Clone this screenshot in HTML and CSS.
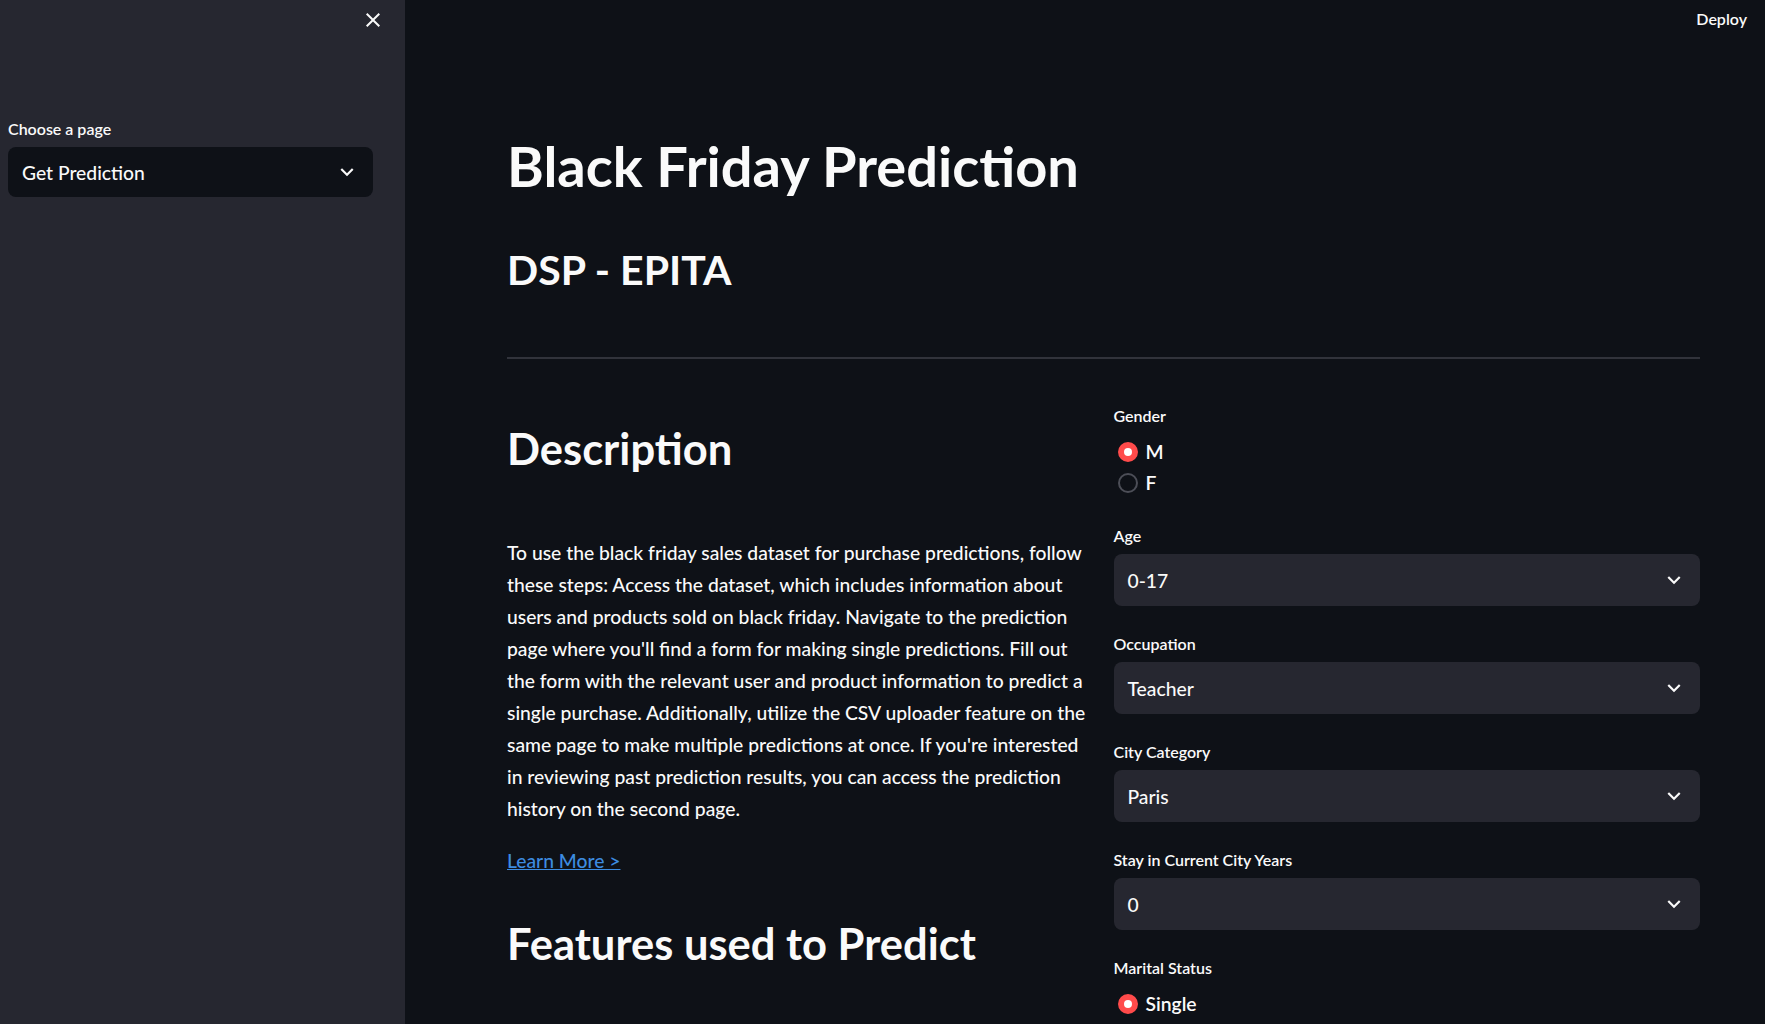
FILE: index.html
```html
<!DOCTYPE html>
<html lang="en">
<head>
<meta charset="utf-8">
<title>Black Friday Prediction</title>
<link rel="stylesheet" href="styles.css">
</head>
<body>
<aside class="sidebar">
  <div class="sidebar-top">
    <button class="icon-btn" aria-label="Close sidebar">
      <svg viewBox="0 0 24 24" width="24" height="24"><path fill="currentColor" d="M19 6.41L17.59 5 12 10.59 6.41 5 5 6.41 10.59 12 5 17.59 6.41 19 12 13.41 17.59 19 19 17.59 13.41 12z"/></svg>
    </button>
  </div>
  <div class="sidebar-body">
    <div class="field">
      <div class="field-label">Choose a page</div>
      <div class="select select-dark">
        <span class="select-value">Get Prediction</span>
        <svg class="chev" viewBox="0 0 24 24" width="26" height="26"><path fill="currentColor" d="M16.59 8.59L12 13.17 7.41 8.59 6 10l6 6 6-6z"/></svg>
      </div>
    </div>
  </div>
</aside>
<main class="main">
  <header class="topbar"><span class="deploy">Deploy</span></header>
  <div class="content">
    <h1 class="title">Black Friday Prediction</h1>
    <h2 class="subtitle">DSP - EPITA</h2>
    <hr class="divider">
    <div class="columns">
      <div class="col">
        <h2 class="section">Description</h2>
        <p class="desc">To use the black friday sales dataset for purchase predictions, follow these steps: Access the dataset, which includes information about users and products sold on black friday. Navigate to the prediction page where you'll find a form for making single predictions. Fill out the form with the relevant user and product information to predict a single purchase. Additionally, utilize the CSV uploader feature on the same page to make multiple predictions at once. If you're interested in reviewing past prediction results, you can access the prediction history on the second page.</p>
        <p class="learn"><a href="#">Learn More &gt;</a></p>
        <h2 class="section section-2">Features used to Predict</h2>
      </div>
      <div class="col form">
        <div class="radio-group">
          <div class="field-label radio-label">Gender</div>
          <div class="radio-row"><span class="radio checked"></span><span class="radio-text">M</span></div>
          <div class="radio-row"><span class="radio"></span><span class="radio-text">F</span></div>
        </div>
        <div class="field">
          <div class="field-label">Age</div>
          <div class="select"><span class="select-value">0-17</span><svg class="chev" viewBox="0 0 24 24" width="26" height="26"><path fill="currentColor" d="M16.59 8.59L12 13.17 7.41 8.59 6 10l6 6 6-6z"/></svg></div>
        </div>
        <div class="field">
          <div class="field-label">Occupation</div>
          <div class="select"><span class="select-value">Teacher</span><svg class="chev" viewBox="0 0 24 24" width="26" height="26"><path fill="currentColor" d="M16.59 8.59L12 13.17 7.41 8.59 6 10l6 6 6-6z"/></svg></div>
        </div>
        <div class="field">
          <div class="field-label">City Category</div>
          <div class="select"><span class="select-value">Paris</span><svg class="chev" viewBox="0 0 24 24" width="26" height="26"><path fill="currentColor" d="M16.59 8.59L12 13.17 7.41 8.59 6 10l6 6 6-6z"/></svg></div>
        </div>
        <div class="field">
          <div class="field-label">Stay in Current City Years</div>
          <div class="select"><span class="select-value">0</span><svg class="chev" viewBox="0 0 24 24" width="26" height="26"><path fill="currentColor" d="M16.59 8.59L12 13.17 7.41 8.59 6 10l6 6 6-6z"/></svg></div>
        </div>
        <div class="radio-group">
          <div class="field-label radio-label">Marital Status</div>
          <div class="radio-row"><span class="radio checked"></span><span class="radio-text">Single</span></div>
        </div>
      </div>
    </div>
  </div>
</main>
</body>
</html>
```
FILE: styles.css
```css
* { box-sizing: border-box; margin: 0; padding: 0; }
html, body { height: 100%; }
body {
  display: flex;
  height: 1024px;
  overflow: hidden;
  background: #0e1117;
  color: #fafafa;
  font-family: Lato, "Noto Sans", sans-serif;
  font-weight: 500;
}

/* Sidebar */
.sidebar { width: 405px; flex: none; background: #262730; }
.sidebar-top { display: flex; justify-content: flex-end; padding: 4px 16px 0 0; height: 36px; }
.icon-btn {
  width: 32px; height: 32px; border: 0; background: transparent; color: #fafafa;
  display: flex; align-items: center; justify-content: center;
}
.sidebar-body { padding: 79px 32px 0 8px; }

/* Fields */
.field { display: flex; flex-direction: column; }
.field-label { font-size: 16px; line-height: 28px; height: 28px; margin-bottom: 4px; font-weight: 600; }
.select {
  height: 52px; border-radius: 8px; background: #262730;
  display: flex; align-items: center; justify-content: space-between;
  padding: 0 13px 0 14px; font-size: 19.3px;
}
.select-dark { background: #0e1117; height: 50px; }
.chev { color: #fafafa; flex: none; }

/* Main */
.main { flex: 1; display: block; min-width: 0; overflow: hidden; }
.topbar { height: 36px; display: flex; justify-content: flex-end; align-items: center; padding-right: 18px; }
.deploy { font-size: 16px; font-weight: 600; }
.content { padding: 95px 65px 0 102px; }
.title { font-size: 56px; line-height: 70px; font-weight: 700; }
.subtitle { font-size: 41px; line-height: 50px; font-weight: 700; margin-top: 44px; }
.divider { margin-top: 62px; height: 2px; border: 0; background: #31333b; }

.columns { display: grid; grid-template-columns: 1fr 1fr; column-gap: 20px; margin-top: 43px; }
.section { font-size: 43.5px; line-height: 56px; font-weight: 700; margin-top: 18px; }
.section-2 { margin-top: 38px; }
.desc { margin-top: 61px; font-size: 19.3px; line-height: 32px; max-width: 585px; }
.learn { margin-top: 20px; font-size: 19.3px; line-height: 32px; }
.learn a { color: #3d8ce0; text-decoration: underline; }

/* Form column */
.form { display: flex; flex-direction: column; gap: 24px; }
.radio-label { margin-bottom: 6px; }
.radio-row { height: 31px; display: flex; align-items: center; padding-left: 4px; gap: 8px; font-size: 19.3px; font-weight: 600; }
.radio {
  width: 20px; height: 20px; border-radius: 50%; border: 2px solid #4c4e57;
  background: #0e1117; display: flex; align-items: center; justify-content: center;
}
.radio.checked { background: #ff4b4b; border-color: #ff4b4b; }
.radio.checked::after { content: ""; width: 8px; height: 8px; border-radius: 50%; background: #fff; }
```
